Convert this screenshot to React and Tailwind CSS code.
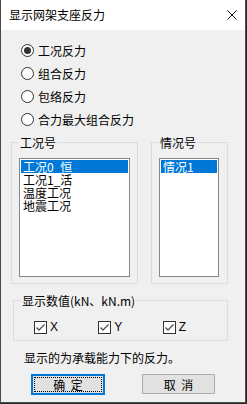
import { useState } from "react";

const cjk = { fontFamily: '"Microsoft YaHei", "Noto Sans CJK SC", sans-serif' };

function Radio({ checked, label, onClick }) {
  return (
    <div className="flex h-[23px] items-center cursor-default" onClick={onClick}>
      <span className="flex h-[13px] w-[13px] items-center justify-center rounded-full border border-[#333] bg-white">
        {checked && <span className="h-[7px] w-[7px] rounded-full bg-[#333]" />}
      </span>
      <span className="ml-[4px] text-[12px] leading-[14px] text-black">{label}</span>
    </div>
  );
}

function Check({ label }) {
  return (
    <div className="flex w-[66px] items-center">
      <span className="flex h-[13px] w-[13px] items-center justify-center border border-[#333] bg-white">
        <svg width="11" height="11" viewBox="0 0 11 11">
          <path d="M1.5 5.5 L4 8 L9.5 2.5" fill="none" stroke="#555" strokeWidth="1.4" />
        </svg>
      </span>
      <span className="ml-[3px] text-[12px] leading-[13px] text-black" style={{ fontFamily: '"Liberation Sans", Arial, sans-serif' }}>
        {label}
      </span>
    </div>
  );
}

function GroupBox({ title, className, children }) {
  return (
    <div className={`relative border border-[#dcdcdc] ${className}`}>
      <span className="absolute left-[7px] top-[-7px] bg-[#f0f0f0] px-[1px] text-[12px] leading-[13px] text-black">
        {title}
      </span>
      {children}
    </div>
  );
}

function ListBox({ items, width }) {
  return (
    <div className={`h-[119px] border border-[#828790] bg-white p-[1px] ${width}`}>
      {items.map((it, i) => (
        <div
          key={it}
          className={`h-[13px] pl-[2px] text-[12px] leading-[13px] ${i === 0 ? "bg-[#0078d7] text-white" : "text-black"}`}
        >
          {it}
        </div>
      ))}
    </div>
  );
}

export default function App() {
  const [mode, setMode] = useState(0);
  const modes = ["工况反力", "组合反力", "包络反力", "合力最大组合反力"];

  return (
    <div className="h-[404px] w-[247px] bg-[#1f2d27]" style={cjk}>
      <div className="flex h-[403px] w-[246px] flex-col border-x border-b border-[#4b4b4b] bg-[#f0f0f0]">
        <div className="flex h-[30px] items-center justify-between bg-white pl-[8px] pr-[8px]">
          <span className="text-[12px] leading-[14px] text-black">显示网架支座反力</span>
          <svg width="10" height="10" viewBox="0 0 10 10">
            <path d="M0.5 0.5 L9.5 9.5 M9.5 0.5 L0.5 9.5" stroke="#111" strokeWidth="1" />
          </svg>
        </div>

        <div className="pl-[20px] pt-[9px]">
          {modes.map((m, i) => (
            <Radio key={m} label={m} checked={mode === i} onClick={() => setMode(i)} />
          ))}
        </div>

        <div className="mt-[11px] flex pl-[10px]">
          <GroupBox title="工况号" className="h-[142px] w-[127px] pl-[7px] pt-[15px]">
            <ListBox items={["工况0_恒", "工况1_活", "温度工况", "地震工况"]} width="w-[111px]" />
          </GroupBox>
          <GroupBox title="情况号" className="ml-[13px] h-[142px] w-[77px] pl-[7px] pt-[15px]">
            <ListBox items={["情况1"]} width="w-[60px]" />
          </GroupBox>
        </div>

        <GroupBox title="显示数值(kN、kN.m)" className="ml-[12px] mt-[16px] h-[41px] w-[215px]">
          <div className="flex pl-[20px] pt-[20px]">
            <Check label="X" />
            <Check label="Y" />
            <Check label="Z" />
          </div>
        </GroupBox>

        <div className="ml-[23px] mt-[10px] text-[12px] leading-[14px] text-black">显示的为承载能力下的反力。</div>

        <div className="mt-[9px] flex items-start">
          <button className="ml-[30px] flex h-[21px] w-[74px] items-center justify-center border-2 border-[#0078d7] bg-[#e1e1e1] p-[1px]">
            <span className="flex h-full w-full items-center justify-center border border-dotted border-black text-[12px] leading-[13px] text-black">
              确&nbsp;&nbsp;定
            </span>
          </button>
          <button className="ml-[37px] flex h-[20px] w-[73px] items-center justify-center border border-[#adadad] bg-[#e1e1e1] text-[12px] leading-[13px] text-black">
            取&nbsp;&nbsp;消
          </button>
        </div>
      </div>
    </div>
  );
}
